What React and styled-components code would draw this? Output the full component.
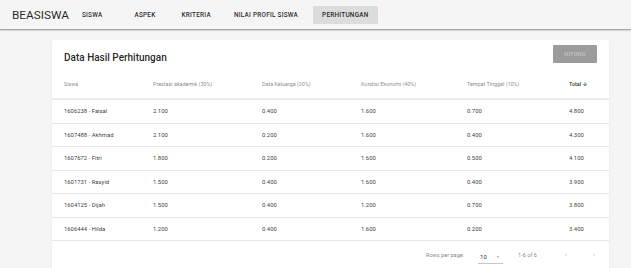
import React from "react";
import styled, { createGlobalStyle } from "styled-components";

const GlobalStyle = createGlobalStyle`
  body {
    margin: 0;
    background-color: #f5f5f5;
    font-family: Roboto, "Liberation Sans", sans-serif;
    color: rgba(0, 0, 0, 0.87);
  }
`;

const Toolbar = styled.header`
  height: 29px;
  display: flex;
  align-items: center;
  padding: 0 12px;
  background-color: #f5f5f5;
  box-shadow: 0 1px 2px rgba(0, 0, 0, 0.25), 0 1px 1px rgba(0, 0, 0, 0.2);
  position: relative;
  z-index: 1;
`;

const Brand = styled.div`
  font-size: 11.8px;
  font-weight: 400;
  margin-right: 2px;
`;

const Nav = styled.nav`
  display: flex;
  align-items: center;
  height: 100%;
`;

const NavButton = styled.button`
  border: none;
  font-family: inherit;
  font-size: 6.4px;
  font-weight: 500;
  letter-spacing: 0.25px;
  text-transform: uppercase;
  color: rgba(0, 0, 0, 0.87);
  height: 18px;
  padding: 0 ${(p) => p.$pad || 11}px;
  margin-right: ${(p) => p.$gap || 0}px;
  border-radius: 1px;
  background-color: ${(p) => (p.$active ? "#dcdcdc" : "transparent")};
`;

const Main = styled.main`
  padding: 11px 22px 0 52px;
`;

const Card = styled.section`
  background-color: #fff;
  border-radius: 1px;
  box-shadow: 0 1px 2px rgba(0, 0, 0, 0.08);
`;

const CardHeader = styled.div`
  height: 30px;
  display: flex;
  align-items: center;
  justify-content: space-between;
  padding: 0 12px;
`;

const CardTitle = styled.h2`
  margin: 0;
  font-size: 10px;
  font-weight: 500;
  position: relative;
  top: 2px;
`;

const ActionButton = styled.button`
  width: 44px;
  height: 18px;
  border: none;
  border-radius: 1px;
  background-color: #9c9c9c;
  color: #c4c4c4;
  font-family: inherit;
  font-size: 5.6px;
  font-weight: 500;
  letter-spacing: 0.2px;
  text-transform: uppercase;
  position: relative;
  top: -1px;
  cursor: default;
`;

const columns = "89px 109px 99px 106px 102px 1fr";

const HeadRow = styled.div`
  display: grid;
  grid-template-columns: ${columns};
  height: 30px;
  box-sizing: border-box;
  align-items: center;
  border-bottom: 2px solid #ececec;
`;

const HeadCell = styled.div`
  padding-left: 12px;
  font-size: 5.4px;
  font-weight: ${(p) => (p.$sorted ? 500 : 400)};
  color: ${(p) => (p.$sorted ? "rgba(0,0,0,0.87)" : "rgba(0,0,0,0.5)")};
  display: flex;
  align-items: center;
  gap: 1px;
  white-space: nowrap;
`;

const Row = styled.div`
  display: grid;
  grid-template-columns: ${columns};
  height: 23.5px;
  box-sizing: border-box;
  align-items: center;
  border-bottom: 1px solid #e6e6e6;
`;

const Cell = styled.div`
  padding-left: 12px;
  font-size: 5.9px;
  color: rgba(0, 0, 0, 0.8);
  white-space: nowrap;
`;

const Footer = styled.div`
  height: 28px;
  display: flex;
  align-items: center;
  justify-content: flex-end;
  padding-right: 10px;
  font-size: 5.6px;
  color: rgba(0, 0, 0, 0.54);
`;

const RowsSelect = styled.div`
  display: flex;
  align-items: center;
  justify-content: space-between;
  width: 25px;
  height: 14px;
  margin-left: 14px;
  margin-right: 15px;
  padding: 0 2px;
  box-sizing: border-box;
  border-bottom: 1px solid #c8c8c8;
  color: rgba(0, 0, 0, 0.87);
  font-size: 5.9px;
  position: relative;
  top: 2px;
`;

const PageInfo = styled.span`
  margin-right: 24px;
`;

const PageButton = styled.button`
  border: none;
  background: transparent;
  padding: 0;
  width: 10px;
  height: 14px;
  margin-left: ${(p) => p.$gap || 0}px;
  display: flex;
  align-items: center;
  justify-content: center;
  color: rgba(0, 0, 0, 0.3);
`;

const Chevron = ({ dir }) => (
  <svg width="6" height="6" viewBox="0 0 24 24">
    <path
      d={dir === "left" ? "M15.4 7.4L14 6l-6 6 6 6 1.4-1.4L10.8 12z" : "M8.6 16.6L10 18l6-6-6-6-1.4 1.4 4.6 4.6z"}
      fill="currentColor"
    />
  </svg>
);

const ArrowDown = () => (
  <svg width="6" height="6" viewBox="0 0 24 24">
    <path d="M20 12l-1.4-1.4-5.6 5.6V4h-2v12.2l-5.6-5.6L4 12l8 8 8-8z" fill="currentColor" />
  </svg>
);

const Caret = () => (
  <svg width="6" height="6" viewBox="0 0 24 24">
    <path d="M7 10l5 5 5-5z" fill="rgba(0,0,0,0.54)" />
  </svg>
);

const headers = [
  "Siswa",
  "Prestasi akademik (30%)",
  "Data Keluarga (20%)",
  "Kondisi Ekonomi (40%)",
  "Tempat Tinggal (10%)",
];

const rows = [
  ["1606238 - Faisal", "2.100", "0.400", "1.600", "0.700", "4.800"],
  ["1607488 - Akhmad", "2.100", "0.200", "1.600", "0.400", "4.300"],
  ["1607672 - Fitri", "1.800", "0.200", "1.600", "0.500", "4.100"],
  ["1601731 - Rasyid", "1.500", "0.400", "1.600", "0.400", "3.900"],
  ["1604125 - Dijah", "1.500", "0.400", "1.200", "0.700", "3.800"],
  ["1606444 - Hilda", "1.200", "0.400", "1.600", "0.200", "3.400"],
];

const navItems = [
  { label: "Siswa", gap: 10 },
  { label: "Aspek", gap: 4 },
  { label: "Kriteria", gap: 1 },
  { label: "Nilai Profil Siswa", gap: 4 },
  { label: "Perhitungan", pad: 9, active: true },
];

const App = () => {
  return (
    <>
      <GlobalStyle />
      <Toolbar>
        <Brand>BEASISWA</Brand>
        <Nav>
          {navItems.map((item) => (
            <NavButton key={item.label} $pad={item.pad} $gap={item.gap} $active={item.active}>
              {item.label}
            </NavButton>
          ))}
        </Nav>
      </Toolbar>
      <Main>
        <Card>
          <CardHeader>
            <CardTitle>Data Hasil Perhitungan</CardTitle>
            <ActionButton aria-disabled="true">Hitung</ActionButton>
          </CardHeader>
          <HeadRow>
            {headers.map((h) => (
              <HeadCell key={h}>{h}</HeadCell>
            ))}
            <HeadCell $sorted>
              Total <ArrowDown />
            </HeadCell>
          </HeadRow>
          {rows.map((r) => (
            <Row key={r[0]}>
              {r.map((v, i) => (
                <Cell key={i}>{v}</Cell>
              ))}
            </Row>
          ))}
          <Footer>
            <span>Rows per page:</span>
            <RowsSelect>
              10 <Caret />
            </RowsSelect>
            <PageInfo>1-6 of 6</PageInfo>
            <PageButton aria-disabled="true">
              <Chevron dir="left" />
            </PageButton>
            <PageButton aria-disabled="true" $gap={18}>
              <Chevron dir="right" />
            </PageButton>
          </Footer>
        </Card>
      </Main>
    </>
  );
};

export default App;
